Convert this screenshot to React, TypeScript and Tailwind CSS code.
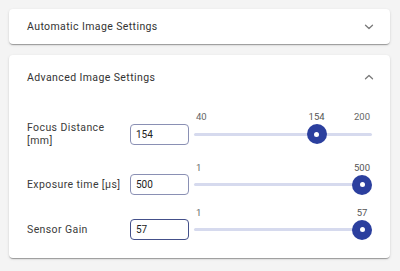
import React from "react";

type SliderRowProps = {
  label: string;
  value: number;
  min: number;
  max: number;
  focused?: boolean;
  className?: string;
};

function SliderRow({ label, value, min, max, focused, className }: SliderRowProps) {
  const frac = (value - min) / (max - min);
  // thumb travels inside the track, inset by its radius (10px)
  const thumbLeft = `calc(10px + (100% - 20px) * ${frac})`;
  return (
    <div className={`flex items-center ${className ?? ""}`}>
      <div className="w-[100px] text-[10.5px] leading-[13px] tracking-[0.4px] text-[#3b3b3b]">{label}</div>
      <div
        className={`ml-[3px] flex h-[21px] w-[59px] items-center rounded-[4px] border px-[5px] text-[10px] text-[#222] ${
          focused ? "border-[#44508a]" : "border-[#8a90b4]"
        }`}
      >
        {value}
      </div>
      <div className="relative ml-[5px] h-[20px] w-[178px]">
        <div className="absolute left-0 right-0 top-[8.5px] h-[3px] rounded-full bg-[#d6daee]" />
        <div className="absolute left-[2px] top-[-13px] text-[9.5px] leading-[12px] text-[#666]">{min}</div>
        {value !== max && (
          <div className="absolute right-[2px] top-[-13px] text-[9.5px] leading-[12px] text-[#666]">{max}</div>
        )}
        <div
          className="absolute top-[-13px] -translate-x-1/2 text-[9.5px] leading-[12px] text-[#555]"
          style={{ left: thumbLeft }}
        >
          {value}
        </div>
        <div
          className="absolute top-0 flex h-[20px] w-[20px] -translate-x-1/2 items-center justify-center rounded-full bg-[#2b3f9e]"
          style={{ left: thumbLeft }}
        >
          <div className="h-[5px] w-[5px] rounded-full bg-white" />
        </div>
      </div>
    </div>
  );
}

function Chevron({ up }: { up?: boolean }) {
  return (
    <svg width="10" height="6" viewBox="0 0 10 6" className="block">
      <polyline
        points={up ? "1.5,4.8 5,1.5 8.5,4.8" : "1.5,1.2 5,4.5 8.5,1.2"}
        fill="none"
        stroke="#7a7a7a"
        strokeWidth="1.3"
        strokeLinecap="round"
        strokeLinejoin="round"
      />
    </svg>
  );
}

export default function App() {
  const shadow =
    "shadow-[0px_2px_1px_-1px_rgba(0,0,0,0.2),0px_1px_1px_0px_rgba(0,0,0,0.14),0px_1px_3px_0px_rgba(0,0,0,0.12)]";
  return (
    <div
      className="h-[271px] w-[400px] overflow-hidden bg-[#f4f4f4] pl-[9px] pt-[9px]"
      style={{ fontFamily: "Roboto, 'Liberation Sans', sans-serif" }}
    >
      <div className={`flex h-[35px] w-[381px] items-center justify-between rounded-[4px] bg-white pl-[18px] pr-[16px] ${shadow}`}>
        <span className="text-[10.5px] tracking-[0.4px] text-[#333]">Automatic Image Settings</span>
        <Chevron />
      </div>
      <div className={`mt-[11px] w-[381px] rounded-[4px] bg-white pb-[18px] ${shadow}`}>
        <div className="flex h-[44px] items-center justify-between pl-[18px] pr-[16px]">
          <span className="pt-[2px] text-[10.5px] tracking-[0.4px] text-[#333]">Advanced Image Settings</span>
          <Chevron up />
        </div>
        <div className="pl-[18px] pt-[22px]">
          <SliderRow label="Focus Distance [mm]" value={154} min={40} max={200} />
          <SliderRow label="Exposure time [μs]" value={500} min={1} max={500} className="mt-[27px]" />
          <SliderRow label="Sensor Gain" value={57} min={1} max={57} focused className="mt-[24px]" />
        </div>
      </div>
    </div>
  );
}
